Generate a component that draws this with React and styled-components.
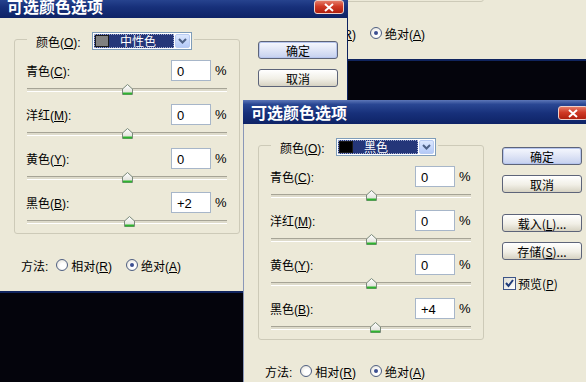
import React from "react";
import styled, { createGlobalStyle } from "styled-components";

const GlobalStyle = createGlobalStyle`
  html, body {
    margin: 0;
    padding: 0;
    background: #04040c;
  }
  body {
    font-family: "Liberation Sans", "Noto Sans CJK SC", sans-serif;
    font-size: 12px;
    color: #000;
  }
`;

const dialogs = [
  {
    id: "back",
    x: 243,
    y: -238,
    swatch: "#808080",
    colorName: "中性色",
    values: [0, 0, 0, 2],
  },
  {
    id: "first",
    x: -1,
    y: -6,
    swatch: "#808080",
    colorName: "中性色",
    values: [0, 0, 0, 2],
  },
  {
    id: "second",
    x: 243,
    y: 100,
    swatch: "#000000",
    colorName: "黑色",
    values: [0, 0, 0, 4],
  },
];

const channels = [
  { name: "青色", key: "C" },
  { name: "洋红", key: "M" },
  { name: "黄色", key: "Y" },
  { name: "黑色", key: "B" },
];

const fmt = (v) => (v > 0 ? `+${v}` : `${v}`);

const SelectiveColorDialog = ({ d }) => (
  <Window $x={d.x} $y={d.y}>
    <TitleBar>
      <Title>可选颜色选项</Title>
      <CloseButton>
        <svg width="10" height="9" viewBox="0 0 10 9">
          <path d="M1 1 L9 8 M9 1 L1 8" stroke="#fff" strokeWidth="2" />
        </svg>
      </CloseButton>
    </TitleBar>
    <Body>
      <LeftColumn>
        <GroupBox>
          <Legend>
            <LegendLabel>
              颜色(<u>O</u>):
            </LegendLabel>
            <Combo>
              <ComboValue>
                <Swatch $color={d.swatch} />
                <ComboText>{d.colorName}</ComboText>
              </ComboValue>
              <ComboArrow>
                <svg width="9" height="6" viewBox="0 0 9 6">
                  <path d="M1 1 L4.5 4.5 L8 1" fill="none" stroke="#4d6185" strokeWidth="2" />
                </svg>
              </ComboArrow>
            </Combo>
          </Legend>
          {channels.map((c, i) => (
            <ChannelRow key={c.key}>
              <ValueLine>
                <FieldLabel>
                  {c.name}(<u>{c.key}</u>):
                </FieldLabel>
                <Field>{fmt(d.values[i])}</Field>
                <Pct>%</Pct>
              </ValueLine>
              <Slider>
                <Track />
                <Thumb style={{ left: 96 + d.values[i] }}>
                  <svg width="11" height="11" viewBox="0 0 11 11">
                    <defs>
                      <linearGradient id={`tg-${d.id}-${i}`} x1="0" y1="0" x2="0" y2="1">
                        <stop offset="0" stopColor="#ffffff" />
                        <stop offset="1" stopColor="#dcdcd4" />
                      </linearGradient>
                    </defs>
                    <path
                      d="M5.5 0.5 L10.5 5 L10.5 10.5 L0.5 10.5 L0.5 5 Z"
                      fill={`url(#tg-${d.id}-${i})`}
                      stroke="#7b8a7b"
                    />
                    <path d="M1 9.5 L10 9.5" stroke="#2fb32f" strokeWidth="2" />
                  </svg>
                </Thumb>
              </Slider>
            </ChannelRow>
          ))}
        </GroupBox>
        <MethodRow>
          <span>方法:</span>
          <RadioOption>
            <Radio />
            <span>
              相对(<u>R</u>)
            </span>
          </RadioOption>
          <RadioOption>
            <Radio $checked />
            <span>
              绝对(<u>A</u>)
            </span>
          </RadioOption>
        </MethodRow>
      </LeftColumn>
      <RightColumn>
        <Button $default>确定</Button>
        <Button>取消</Button>
        <Button $gapBefore>
          载入(<u>L</u>)...
        </Button>
        <Button>
          存储(<u>S</u>)...
        </Button>
        <CheckOption>
          <CheckBox>
            <svg width="9" height="9" viewBox="0 0 9 9">
              <path d="M1 4 L3.5 7 L8 1" fill="none" stroke="#1f3c7a" strokeWidth="2" />
            </svg>
          </CheckBox>
          <span>
            预览(<u>P</u>)
          </span>
        </CheckOption>
      </RightColumn>
    </Body>
  </Window>
);

const App = () => (
  <>
    <GlobalStyle />
    <Desktop>
      {dialogs.map((d) => (
        <SelectiveColorDialog key={d.id} d={d} />
      ))}
    </Desktop>
  </>
);

export default App;

// desktop and windows
const Desktop = styled.div`
  position: relative;
  width: 586px;
  height: 382px;
  overflow: hidden;
  background: #04040c;
`;

const Window = styled.div`
  position: absolute;
  left: ${(p) => p.$x}px;
  top: ${(p) => p.$y}px;
  width: 349px;
  height: 299px;
  box-sizing: border-box;
  display: flex;
  flex-direction: column;
  background: #ece9d8;
  border-left: 1px solid #8a97b8;
  border-right: 1px solid #0d2260;
  border-bottom: 2px solid #10245e;
`;

const TitleBar = styled.div`
  height: 24px;
  flex: none;
  display: flex;
  align-items: center;
  justify-content: space-between;
  padding: 0 4px 0 8px;
  margin: 0 -1px;
  background: linear-gradient(180deg, #5d77b8 0%, #2a4793 18%, #17307a 55%, #0e2366 100%);
`;

const Title = styled.span`
  font-family: "Noto Sans CJK SC", sans-serif;
  font-size: 16px;
  font-weight: 700;
  color: #fff;
  line-height: 24px;
`;

const CloseButton = styled.div`
  width: 30px;
  height: 14px;
  margin-top: 2px;
  box-sizing: border-box;
  display: flex;
  align-items: center;
  justify-content: center;
  border: 1px solid #f0d0c8;
  border-radius: 3px;
  background: linear-gradient(180deg, #e47a66 0%, #d03a26 45%, #b0200f 100%);
`;

const Body = styled.div`
  flex: 1;
  display: flex;
  padding: 21px 0 0 14px;
`;

const LeftColumn = styled.div`
  width: 226px;
  display: flex;
  flex-direction: column;
`;

// group box
const GroupBox = styled.div`
  height: 195px;
  flex: none;
  box-sizing: border-box;
  border: 1px solid #cdcab8;
  border-radius: 3px;
  padding: 0 12px 0 11px;
  display: flex;
  flex-direction: column;
`;

const Legend = styled.div`
  align-self: flex-start;
  display: flex;
  align-items: center;
  margin: -8px 0 10px 1px;
  padding: 0 2px 0 9px;
  background: #ece9d8;
`;

const LegendLabel = styled.span`
  width: 56px;
`;

const Combo = styled.div`
  width: 100px;
  height: 18px;
  box-sizing: border-box;
  border: 1px solid #7f9db9;
  background: #fff;
  display: flex;
  align-items: center;
  padding: 1px;
`;

const ComboValue = styled.div`
  flex: 1;
  height: 100%;
  box-sizing: border-box;
  display: flex;
  align-items: center;
  padding-left: 1px;
  background: #243679;
  outline: 1px dotted #9aa6d0;
  outline-offset: -1px;
  color: #fff;
`;

const ComboText = styled.span`
  margin-left: 11px;
  font-family: "Noto Sans CJK SC", sans-serif;
  line-height: 14px;
`;

const Swatch = styled.span`
  width: 14px;
  height: 12px;
  flex: none;
  box-sizing: border-box;
  border: 1px solid #1a1a1a;
  background: ${(p) => p.$color};
`;

const ComboArrow = styled.div`
  width: 15px;
  height: 100%;
  margin-left: 1px;
  box-sizing: border-box;
  display: flex;
  align-items: center;
  justify-content: center;
  border: 1px solid #b8cbf2;
  border-radius: 2px;
  background: linear-gradient(180deg, #dce7fd 0%, #c3d5fb 60%, #b4c9f6 100%);
`;

// channel rows
const ChannelRow = styled.div`
  display: flex;
  flex-direction: column;
`;

const ValueLine = styled.div`
  display: flex;
  align-items: center;
  height: 21px;
`;

const FieldLabel = styled.span`
  flex: 1;
`;

const Field = styled.div`
  width: 40px;
  height: 21px;
  box-sizing: border-box;
  border: 1px solid #a7b6c9;
  background: #fff;
  padding: 3px 0 0 5px;
  font-size: 13px;
`;

const Pct = styled.span`
  width: 12px;
  margin-left: 4px;
  font-size: 13px;
`;

const Slider = styled.div`
  position: relative;
  height: 23px;
`;

const Track = styled.div`
  width: 200px;
  height: 2px;
  margin: 7px 0 0 1px;
  border-top: 1px solid #a6a496;
  border-bottom: 1px solid #fff;
  background: #dedbcb;
`;

const Thumb = styled.div`
  position: absolute;
  top: 3px;
  width: 11px;
  height: 11px;
  line-height: 0;
`;

// method row
const MethodRow = styled.div`
  display: flex;
  align-items: center;
  height: 20px;
  margin: 21px 0 0 7px;
  gap: 8px;
`;

const RadioOption = styled.span`
  display: inline-flex;
  align-items: center;
  gap: 3px;
  & + & {
    margin-left: 6px;
  }
`;

const Radio = styled.span`
  width: 12px;
  height: 12px;
  box-sizing: border-box;
  border-radius: 50%;
  border: 1px solid #4f5f82;
  background: radial-gradient(circle at 60% 60%, #ffffff 30%, #dedbd0 100%);
  display: flex;
  align-items: center;
  justify-content: center;
  &::after {
    content: "";
    width: 4px;
    height: 4px;
    border-radius: 50%;
    background: ${(p) => (p.$checked ? "#3c4f91" : "transparent")};
  }
`;

// buttons
const RightColumn = styled.div`
  display: flex;
  flex-direction: column;
  gap: 10px;
  margin: 2px 0 0 18px;
  width: 80px;
`;

const Button = styled.div`
  height: 18px;
  flex: none;
  box-sizing: border-box;
  display: flex;
  align-items: center;
  justify-content: center;
  margin-top: ${(p) => (p.$gapBefore ? "11px" : "0")};
  border: 1px solid #5d6479;
  border-radius: 3px;
  font-family: "Noto Sans CJK SC", sans-serif;
  background: ${(p) =>
    p.$default
      ? "linear-gradient(180deg, #f6f8fe 0%, #dfe5f6 50%, #c5d0ee 100%)"
      : "linear-gradient(180deg, #ffffff 0%, #f1efe6 55%, #d6d2c2 100%)"};
  box-shadow: ${(p) => (p.$default ? "inset 0 0 0 1px #b7c6ee" : "none")};
`;

const CheckOption = styled.div`
  display: flex;
  align-items: center;
  gap: 2px;
  margin: 5px 0 0 1px;
  font-family: "Noto Sans CJK SC", sans-serif;
`;

const CheckBox = styled.span`
  width: 13px;
  height: 13px;
  box-sizing: border-box;
  border: 1px solid #3c5487;
  background: linear-gradient(135deg, #dcdcd4 0%, #ffffff 100%);
  display: flex;
  align-items: center;
  justify-content: center;
`;
